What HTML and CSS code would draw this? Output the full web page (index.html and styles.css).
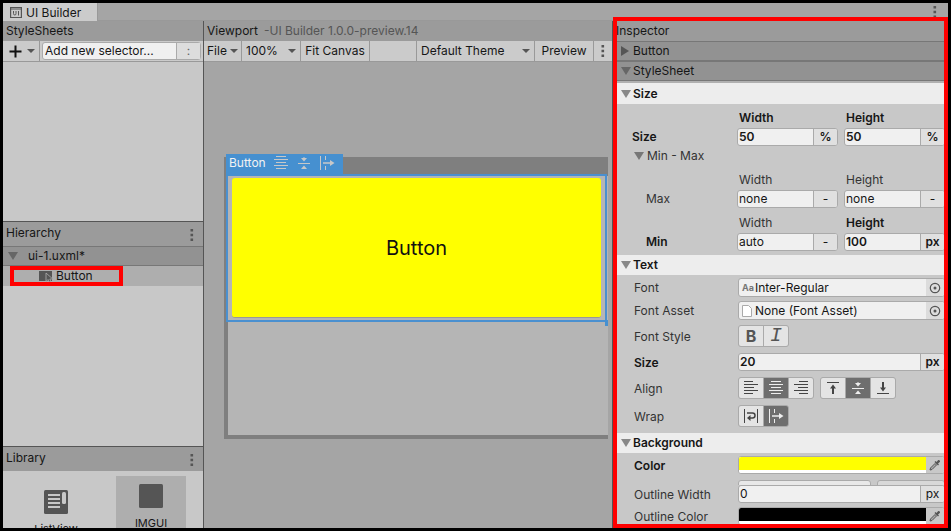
FILE: index.html
```html
<!DOCTYPE html>
<html lang="en">
<head>
<meta charset="utf-8">
<title>UI Builder</title>
<link rel="stylesheet" href="styles.css">
</head>
<body>
<svg class="defs" aria-hidden="true">
  <symbol id="dots" viewBox="0 0 4 12"><path d="M.5 0h2.600v2.600H.5zM.5 4.700h2.600v2.600H.5zM.5 9.400h2.600V12H.5z" fill="#555"/></symbol>
  <symbol id="al" viewBox="0 0 16 16"><path d="M1 1.500h9M1 4.500h14M1 7.500h10M1 10.500h14M1 13.500h9" stroke="currentColor"/></symbol>
  <symbol id="ac" viewBox="0 0 16 16"><path d="M3 1.500h10M1 4.500h14M3 7.500h10M1 10.500h14M3 13.500h10" stroke="currentColor"/></symbol>
  <symbol id="ar" viewBox="0 0 16 16"><path d="M6 1.500h9M1 4.500h14M5 7.500h10M1 10.500h14M6 13.500h9" stroke="currentColor"/></symbol>
  <symbol id="vt" viewBox="0 0 16 16"><path d="M2 2.500h12" stroke="currentColor"/><path d="M8 4.500L11 8.500H9V14H7V8.500H5z" fill="currentColor"/></symbol>
  <symbol id="vm" viewBox="0 0 16 16"><path d="M2 8.500h12" stroke="currentColor"/><path d="M7.500 2h1v1H11L8 6.500 5 3h2.500zM8 10.500L11 14H5z" fill="currentColor"/></symbol>
  <symbol id="vb" viewBox="0 0 16 16"><path d="M2 13.500h12" stroke="currentColor"/><path d="M7 2h2v5.500h2L8 11.500 5 7.500h2z" fill="currentColor"/></symbol>
  <symbol id="wr" viewBox="0 0 16 16"><path d="M1.500 1v14M14.500 1v14" stroke="currentColor"/><path d="M4 5h5.500a2.500 2.500 0 0 1 0 5H7" fill="none" stroke="currentColor" stroke-width="1.500"/><path d="M7.500 7v6L4 10z" fill="currentColor"/></symbol>
  <symbol id="nw" viewBox="0 0 16 16"><path d="M1.500 1v14M6.500 1v4M6.500 11v4" stroke="currentColor"/><path d="M4 8h8" stroke="currentColor" stroke-width="1.500"/><path d="M11 5l4.500 3-4.500 3z" fill="currentColor"/></symbol>
  <symbol id="target" viewBox="0 0 12 12"><circle cx="6" cy="6" r="4.700" fill="none" stroke="#555" stroke-width="1.200"/><circle cx="6" cy="6" r="1.500" fill="#555"/></symbol>
  <symbol id="pick" viewBox="0 0 12 12"><path d="M1 11l.5-2L6 4.500 7.500 6 3 10.500z" fill="#aaa" stroke="#555"/><path d="M5.500 3l1-1 1 1L9 1.200C10 .2 11.800 2 10.800 3L9 4.500l1 1-1 1z" fill="#555"/></symbol>
</svg>
<div class="window">
  <div class="tabs">
    <div class="tab"><svg width="12" height="11" viewBox="0 0 12 11"><path d="M.6.5h10.800v10H.6z" fill="none" stroke="#555" stroke-width="1.200"/><path d="M0 0h12v2H0zM3.500 4v2.500q0 1.500 1.300 1.500T6 6.500V4M8.500 4v4.500" fill="none" stroke="#555"/></svg>UI Builder</div>
    <button class="icon-btn" aria-label="Window menu"><svg class="dots"><use href="#dots"/></svg></button>
  </div>
  <div class="columns">
    <aside class="left">
      <section class="pane sheets">
        <h2 class="head">StyleSheets</h2>
        <div class="toolbar">
          <button class="add" aria-label="Add stylesheet"><svg width="13" height="13" viewBox="0 0 13 13"><path d="M6.500.5v12M.5 6.500h12" stroke="#111" stroke-width="2"/></svg><i class="arrow"></i></button>
          <div class="selector"><input aria-label="New selector" value="Add new selector..."><button aria-label="Pseudo states">:</button></div>
        </div>
      </section>
      <section class="pane hierarchy">
        <h2 class="head tall">Hierarchy<button class="icon-btn" aria-label="Hierarchy menu"><svg class="dots"><use href="#dots"/></svg></button></h2>
        <button class="tree-root"><i class="fold"></i>ui-1.uxml*</button>
        <button class="tree-item"><svg width="14" height="12" viewBox="0 0 14 12"><path d="M0 1h13v10H0z" fill="#555"/><path d="M7 3v8.500l2-2 1.500 2.500 1.500-.7L10.800 9h3z" fill="#555" stroke="#aeaeae" stroke-width=".8"/></svg>Button</button>
      </section>
      <section class="pane library">
        <h2 class="head tall">Library<button class="icon-btn" aria-label="Library menu"><svg class="dots"><use href="#dots"/></svg></button></h2>
        <div class="cards">
          <button class="card lower"><svg width="24" height="24" viewBox="0 0 24 24"><rect width="24" height="24" rx="1.500" fill="#555"/><path d="M4 5h12M4 9h12M4 13h12M4 17h12" stroke="#c8c8c8" stroke-width="2"/><rect x="17" y="1.500" width="5" height="13" rx="2" fill="#555"/><rect x="18" y="2" width="4" height="12" rx="1.500" fill="#c8c8c8"/></svg>ListView</button>
          <button class="card active"><svg width="24" height="24"><rect width="24" height="24" rx="1.500" fill="#555"/></svg>IMGUI</button>
        </div>
      </section>
    </aside>
    <main class="viewport">
      <h2 class="head">Viewport <span>-UI Builder 1.0.0-preview.14</span></h2>
      <div class="toolbar">
        <button class="file">File<i class="arrow"></i></button>
        <div class="drop zoom"><select aria-label="Zoom"><option>100%</option></select><i class="arrow"></i></div>
        <button class="fit">Fit Canvas</button>
        <span class="blank"></span>
        <div class="drop theme"><select aria-label="Theme"><option>Default Theme</option></select><i class="arrow"></i></div>
        <button class="preview">Preview</button>
        <button class="icon-btn" aria-label="Viewport menu"><svg class="dots"><use href="#dots"/></svg></button>
      </div>
      <div class="stage">
        <div class="canvas">
          <div class="selection">
            <div class="tag">Button<svg><use href="#ac"/></svg><svg><use href="#vm"/></svg><svg><use href="#nw"/></svg></div>
            <button class="preview-button">Button</button>
            <i class="handle"></i>
          </div>
        </div>
      </div>
    </main>
    <aside class="inspector">
      <h2 class="head">Inspector</h2>
      <button class="band"><i class="fold closed"></i>Button</button>
      <button class="band"><i class="fold"></i>StyleSheet</button>
      <button class="section first"><i class="fold"></i>Size</button>
      <div class="size-body">
        <div class="pair set">
          <b class="name">Size</b>
          <div class="col"><label for="w">Width</label><div class="field"><input id="w" value="50"><button>%</button></div></div>
          <div class="col"><label for="h">Height</label><div class="field"><input id="h" value="50"><button>%</button></div></div>
        </div>
        <button class="minmax"><i class="fold"></i>Min - Max</button>
        <div class="pair nested">
          <span class="name">Max</span>
          <div class="col"><label for="mw">Width</label><div class="field"><input id="mw" value="none"><button>-</button></div></div>
          <div class="col"><label for="mh">Height</label><div class="field"><input id="mh" value="none"><button>-</button></div></div>
        </div>
        <div class="pair nested">
          <b class="name">Min</b>
          <div class="col"><label for="nw1">Width</label><div class="field"><input id="nw1" value="auto"><button>-</button></div></div>
          <div class="col set"><label for="nh">Height</label><div class="field"><input id="nh" value="100"><button>px</button></div></div>
        </div>
      </div>
      <button class="section"><i class="fold"></i>Text</button>
      <div class="rows">
        <div class="row"><label for="font">Font</label><div class="field object"><small>Aa</small><input id="font" value="Inter-Regular"><button aria-label="Pick font"><svg><use href="#target"/></svg></button></div></div>
        <div class="row"><label for="asset">Font Asset</label><div class="field object"><svg class="page" viewBox="0 0 10 12"><path d="M.5.5h6l3 3v8h-9z" fill="#fff" stroke="#aaa"/></svg><input id="asset" value="None (Font Asset)"><button aria-label="Pick font asset"><svg><use href="#target"/></svg></button></div></div>
        <div class="row mid"><span>Font Style</span><div class="group style"><button>B</button><button class="italic">I</button></div></div>
        <div class="row size set"><label for="fs">Size</label><div class="field"><input id="fs" value="20"><button>px</button></div></div>
        <div class="row mid"><span>Align</span>
          <div class="group"><button aria-label="Left"><svg><use href="#al"/></svg></button><button class="on" aria-label="Center"><svg><use href="#ac"/></svg></button><button aria-label="Right"><svg><use href="#ar"/></svg></button></div>
          <div class="group"><button aria-label="Top"><svg><use href="#vt"/></svg></button><button class="on" aria-label="Middle"><svg><use href="#vm"/></svg></button><button aria-label="Bottom"><svg><use href="#vb"/></svg></button></div>
        </div>
        <div class="row mid"><span>Wrap</span><div class="group"><button aria-label="Wrap"><svg><use href="#wr"/></svg></button><button class="on" aria-label="No wrap"><svg><use href="#nw"/></svg></button></div></div>
      </div>
      <button class="section"><i class="fold"></i>Background</button>
      <div class="rows back">
        <div class="row size set"><label for="bg">Color</label><div class="field color"><input type="color" id="bg" value="#ffff00"><button aria-label="Pick color"><svg><use href="#pick"/></svg></button></div></div>
        <div class="behind"><i></i><i></i></div>
        <div class="row outline"><label for="ow">Outline Width</label><div class="field"><input id="ow" value="0"><button>px</button></div></div>
        <div class="row outline"><label for="oc">Outline Color</label><div class="field color"><input type="color" id="oc" value="#000000"><button aria-label="Pick outline color"><svg><use href="#pick"/></svg></button></div></div>
      </div>
    </aside>
  </div>
</div>
</body>
</html>
```

FILE: styles.css
```css
* { box-sizing: border-box; }
body {
  margin: 0;
  height: 100vh;
  padding: 3px;
  background: #000;
  overflow: hidden;
  font: 12px/16px Inter, "Liberation Sans", sans-serif;
  color: #161616;
}
button, input, select {
  font: inherit;
  color: inherit;
  border: 0;
  border-radius: 0;
  margin: 0;
  padding: 0;
  background: none;
  min-width: 0;
}
button { display: flex; align-items: center; }
svg { flex: none; }
.defs { position: absolute; width: 0; height: 0; }
.window { height: 100%; display: flex; flex-direction: column; background: #a5a5a5; }

.tabs { flex: none; height: 18px; display: flex; justify-content: space-between; border-bottom: 1px solid #999; }
.tab { width: 95px; height: 18px; display: flex; align-items: center; gap: 4px; padding: 1px 0 0 7px; background: #cbcbcb; border-right: 1px solid #999; }
.tabs .icon-btn { width: 26px; }
.icon-btn { justify-content: center; }
.dots { width: 4px; height: 12px; }

.columns { flex: 1; min-height: 0; display: grid; grid-template-columns: 201px minmax(0, 1fr) 335px; }
.left { display: flex; flex-direction: column; min-height: 0; border-right: 1px solid #555; background: #c8c8c8; }
.pane { min-height: 0; overflow: hidden; }
.sheets { flex: 201 1 0; }
.hierarchy { flex: 225 1 0; border-top: 1px solid #555; }
.library { flex: 81 1 0; border-top: 1px solid #555; }
.head { height: 20px; margin: 0; padding: 0 3px; display: flex; align-items: center; background: #9b9b9b; font-size: 12px; font-weight: 400; }
.head span { color: #555; margin-left: 6px; }
.head.tall { height: 24px; padding-bottom: 2px; }
.head .icon-btn { width: 16px; margin-left: auto; padding-top: 4px; }
.toolbar { height: 21px; display: flex; background: #cbcbcb; border-bottom: 1px solid #999; }
.arrow { flex: none; border: 4px solid transparent; border-top: 4px solid #555; border-bottom: 0; }
.fold { flex: none; border: 5px solid transparent; border-top: 8px solid #666; border-bottom: 0; }
.fold.closed { border: 5px solid transparent; border-left: 8px solid #555; border-right: 0; margin-right: 2px; }

.toolbar > .add { flex: none; width: 37px; padding-left: 6px; gap: 5px; }
.selector { flex: 1; min-width: 0; display: flex; margin: 1px 2px; border: 1px solid #aaa; border-radius: 3px; background: #f0f0f0; }
.selector input { flex: 1; width: 0; padding-left: 2px; }
.selector button { width: 24px; justify-content: center; background: #ddd; border-left: 1px solid #aaa; color: #666; }

.tree-root { width: 100%; height: 20px; padding-left: 5px; gap: 10px; background: #929292; border: solid #777; border-width: 1px 0; }
.tree-item { width: 100%; height: 20px; padding-left: 36px; gap: 3px; background: #aeaeae; position: relative; }
.tree-item::after { content: ""; position: absolute; inset: 0 80px 0 7px; border: 4px solid #f00; }
.cards { display: flex; gap: 25px; padding: 5px 17px 0 18px; }
.card { flex: 1; height: 70px; flex-direction: column; gap: 8px; padding-top: 8px; font-size: 11px; line-height: 14px; }
.card.lower { padding-top: 14px; }
.card.active { background: #aeaeae; }

.viewport { display: flex; flex-direction: column; min-width: 0; min-height: 0; border-right: 1px solid #555; }
.toolbar > button, .drop, .blank { border-right: 1px solid #999; }
.toolbar > .icon-btn { border: 0; width: 18px; }
.file { width: 38px; padding-left: 3px; gap: 3px; }
.drop { display: flex; align-items: center; padding: 0 4px; }
.drop select { flex: 1; appearance: none; }
.zoom { width: 59px; }
.theme { width: 118px; }
.fit { width: 69px; justify-content: center; }
.blank { flex: 1; }
.preview { width: 59px; justify-content: center; }
.stage { flex: 1; min-height: 0; padding: 95px 4px 0 20px; overflow: hidden; }
.canvas { position: relative; height: 282px; background: #b5b5b5; border: solid #7f7f7f; border-width: 19px 0 4px 4px; }
.selection { position: absolute; left: -2px; top: -2px; right: 1px; height: 148px; border: 2px solid #4a90d0; padding: 2px 4px; }
.tag { position: absolute; left: -2px; bottom: 100%; width: 117px; height: 22px; padding: 0 0 4px 3px; display: flex; align-items: center; gap: 7px; background: #4690d0; color: #f2f2f2; }
.tag svg { width: 16px; height: 16px; color: #c8c8c8; }
.preview-button { width: 100%; height: 100%; justify-content: center; background: #ff0; border-bottom: 1px solid #999; border-radius: 3px; font-size: 20px; color: #111; }
.handle { position: absolute; right: -3px; bottom: -6px; width: 3px; height: 6px; background: #4690d0; }

.inspector { position: relative; background: #c8c8c8; min-height: 0; overflow: hidden; }
.inspector::after { content: ""; position: absolute; inset: 0; border: 4px solid #f00; border-top: 0; pointer-events: none; }
.columns { position: relative; }
.columns::after { content: ""; position: absolute; right: 0; top: -4px; width: 335px; height: 4px; background: #f00; }
.band { width: 100%; height: 20px; padding-left: 8px; gap: 2px; background: #929292; border: solid #777; border-width: 1px 0; }
.section { width: 100%; height: 20px; padding-left: 8px; gap: 2px; background: #ededed; font-weight: 600; }
.section .fold { border-top-color: #888; }
.section.first { height: 23px; border-top: 2px solid #b0b0b0; }
.size-body { padding: 4px 3px 4px 19px; }
.pair { display: grid; grid-template-columns: 99px 1fr 1fr; column-gap: 6px; align-items: end; }
.col label { display: block; height: 20px; line-height: 20px; padding-left: 2px; color: #333; }
.name { line-height: 18px; color: #333; font-weight: 400; }
.nested { margin-top: 4px; }
.nested + .nested { margin-top: 5px; }
.nested .name { padding-left: 14px; }
b.name, .set, .set label { font-weight: 600; color: #161616; }
.pair.set label, .col.set label, .pair.set button, .col.set button { font-weight: 600; color: #161616; }
.minmax { height: 20px; padding-left: 2px; gap: 3px; color: #333; }
.minmax .fold { border-top-color: #777; }
.field { flex: 1; min-width: 0; height: 18px; display: flex; align-items: center; background: #f0f0f0; border: 1px solid #aaa; border-radius: 3px; overflow: hidden; }
.field input { flex: 1; width: 0; padding-left: 1px; }
.field > button { width: 24px; height: 100%; justify-content: center; background: #e0e0e0; border-left: 1px solid #aaa; }
.rows { padding: 1px 3px 3px 21px; }
.row { height: 23px; display: flex; align-items: center; }
.row > label, .row > span { width: 104px; flex: none; color: #333; padding-top: 1px; }
.row.set > label { color: #161616; }
.row.mid { height: 28px; }
.row.size { height: 24px; }
.field.object { height: 19px; padding-left: 3px; }
.object input { height: 16px; }
.object > button, .color > button { width: 18px; border: 0; background: #dcdcdc; }
.object button svg, .color button svg { width: 12px; height: 12px; }
.object small { font-size: 9px; font-weight: 700; color: #777; }
.page { width: 10px; height: 12px; margin-right: 2px; }
.group { display: flex; height: 22px; margin-right: 6px; border: 1px solid #aaa; border-radius: 3px; overflow: hidden; background: #aaa; gap: 1px; }
.group button { width: 24px; justify-content: center; background: #e4e4e4; color: #444; }
.group .on { background: #6e6e6e; color: #eee; }
.group svg { width: 16px; height: 16px; }
.style button { font-size: 16px; font-weight: 700; color: #555; }
.style .italic { font-family: "Liberation Mono", monospace; font-style: italic; font-weight: 400; font-size: 20px; }
.rows.back { padding-top: 0; }
.color > button { background: #c8c8c8; }
.field.color input { height: 16px; padding: 0; appearance: none; background: #fff; }
.color input::-webkit-color-swatch-wrapper { padding: 0 0 3px; }
.color input::-webkit-color-swatch { border: 0; border-radius: 0; }
.behind { height: 5px; margin: 3px 0 0 104px; display: flex; gap: 6px; overflow: hidden; }
.behind i { height: 12px; flex: 2; border: 1px solid #aaa; border-radius: 3px; background: #e8e8e8; }
.behind i + i { flex: 1; background: #d8d8d8; }
.row.outline { height: 18px; margin-bottom: 4px; }
```
